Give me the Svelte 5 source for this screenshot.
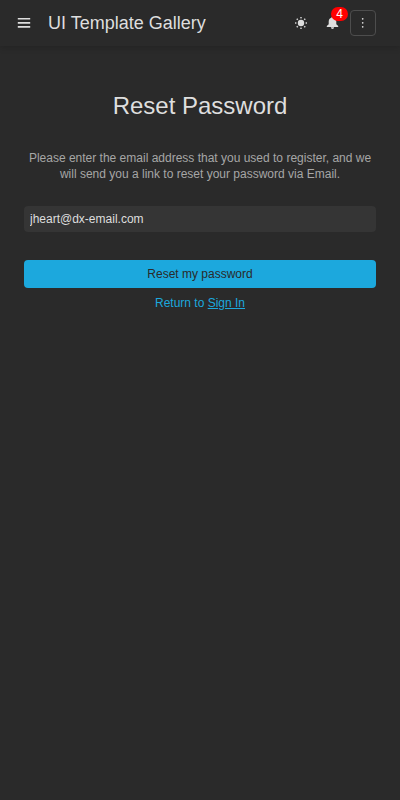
<script>
  let email = $state('jheart@dx-email.com');
  const notifications = 4;
  const rays = [0, 45, 90, 135, 180, 225, 270, 315];
</script>

<div class="app">
  <header>
    <button class="icon menu" aria-label="Menu">
      <svg width="14" height="14" viewBox="0 0 14 14" fill="none" stroke="currentColor" stroke-width="1.6">
        <path d="M.8 2.8h12.4M.8 6.9h12.4M.8 10.9h12.4" />
      </svg>
    </button>
    <div class="title">UI Template Gallery</div>
    <button class="icon" aria-label="Theme">
      <svg width="14" height="14" viewBox="0 0 14 14" fill="currentColor">
        <circle cx="7" cy="7" r="3.2" />
        {#each rays as angle}
          <rect x="6.3" y="1" width="1.4" height="1.4" transform="rotate({angle} 7 7)" />
        {/each}
      </svg>
    </button>
    <button class="icon bell" aria-label="Notifications">
      <svg width="14" height="14" viewBox="0 0 14 14" fill="currentColor">
        <path d="M6.500.7c.7 0 1.100.5 1.100 1.100 1.700.5 2.700 1.900 2.700 3.700v2.700l1.900 1.700v1H.8v-1l1.900-1.700V5.500c0-1.800 1-3.200 2.700-3.700 0-.6.4-1.100 1.100-1.100zM4.900 11.300h3.200a1.600 1.600 0 0 1-3.200 0z" />
      </svg>
      <span class="badge">{notifications}</span>
    </button>
    <button class="icon more" aria-label="More">
      <svg width="14" height="14" viewBox="0 0 14 14" fill="currentColor">
        <circle cx="6.7" cy="2.8" r=".85" />
        <circle cx="6.7" cy="6.8" r=".85" />
        <circle cx="6.7" cy="10.8" r=".85" />
      </svg>
    </button>
  </header>

  <main>
    <h1>Reset Password</h1>
    <p class="hint">Please enter the email address that you used to register, and we will send you a link to reset your password via Email.</p>
    <input type="email" aria-label="Email" bind:value={email} />
    <button class="submit">Reset my password</button>
    <p class="return">Return to <a href="#sign-in">Sign In</a></p>
  </main>
</div>

<style>
  :global(body) {
    margin: 0;
    background: #2a2a2a;
  }
  .app {
    min-height: 100vh;
    background: #2a2a2a;
    color: #dedede;
    font: 12px/16px "Liberation Sans", Arial, sans-serif;
  }
  .app *, .app {
    box-sizing: border-box;
  }
  button, input {
    font: inherit;
    color: inherit;
    margin: 0;
    padding: 0;
    border: 0;
  }
  header {
    display: flex;
    align-items: center;
    height: 46px;
    padding: 0 24px 0 11px;
    box-shadow: 0 2px 6px rgba(0, 0, 0, 0.16);
  }
  .icon {
    position: relative;
    display: flex;
    align-items: center;
    justify-content: center;
    width: 26px;
    height: 26px;
    background: none;
    border-radius: 4px;
  }
  .icon svg {
    display: block;
  }
  .title {
    flex: 1;
    margin-left: 11px;
    font-size: 18px;
    line-height: 24px;
    white-space: nowrap;
  }
  .bell {
    margin: 0 4px 0 6px;
  }
  .badge {
    position: absolute;
    left: 11px;
    top: -3px;
    width: 17px;
    height: 14px;
    border-radius: 7px;
    background: #f00;
    color: #fff;
    font-size: 12px;
    line-height: 14px;
    text-align: center;
  }
  .more {
    border: 1px solid #4d4d4d;
  }
  main {
    display: flex;
    flex-direction: column;
    padding: 44px 24px 0;
    text-align: center;
  }
  h1 {
    margin: 0;
    font-size: 24px;
    line-height: 32px;
    font-weight: 400;
  }
  .hint {
    margin: 28px 0 24px;
    color: #a6a6a6;
  }
  input {
    height: 26px;
    padding: 0 6px;
    border-radius: 4px;
    background: #353535;
    outline: none;
  }
  .submit {
    height: 28px;
    margin-top: 28px;
    border-radius: 4px;
    background: #1ca8dd;
    color: #2a2a2a;
  }
  .return {
    margin: 7px 0 0;
    color: #1ca8dd;
  }
  .return a {
    color: inherit;
  }
</style>
